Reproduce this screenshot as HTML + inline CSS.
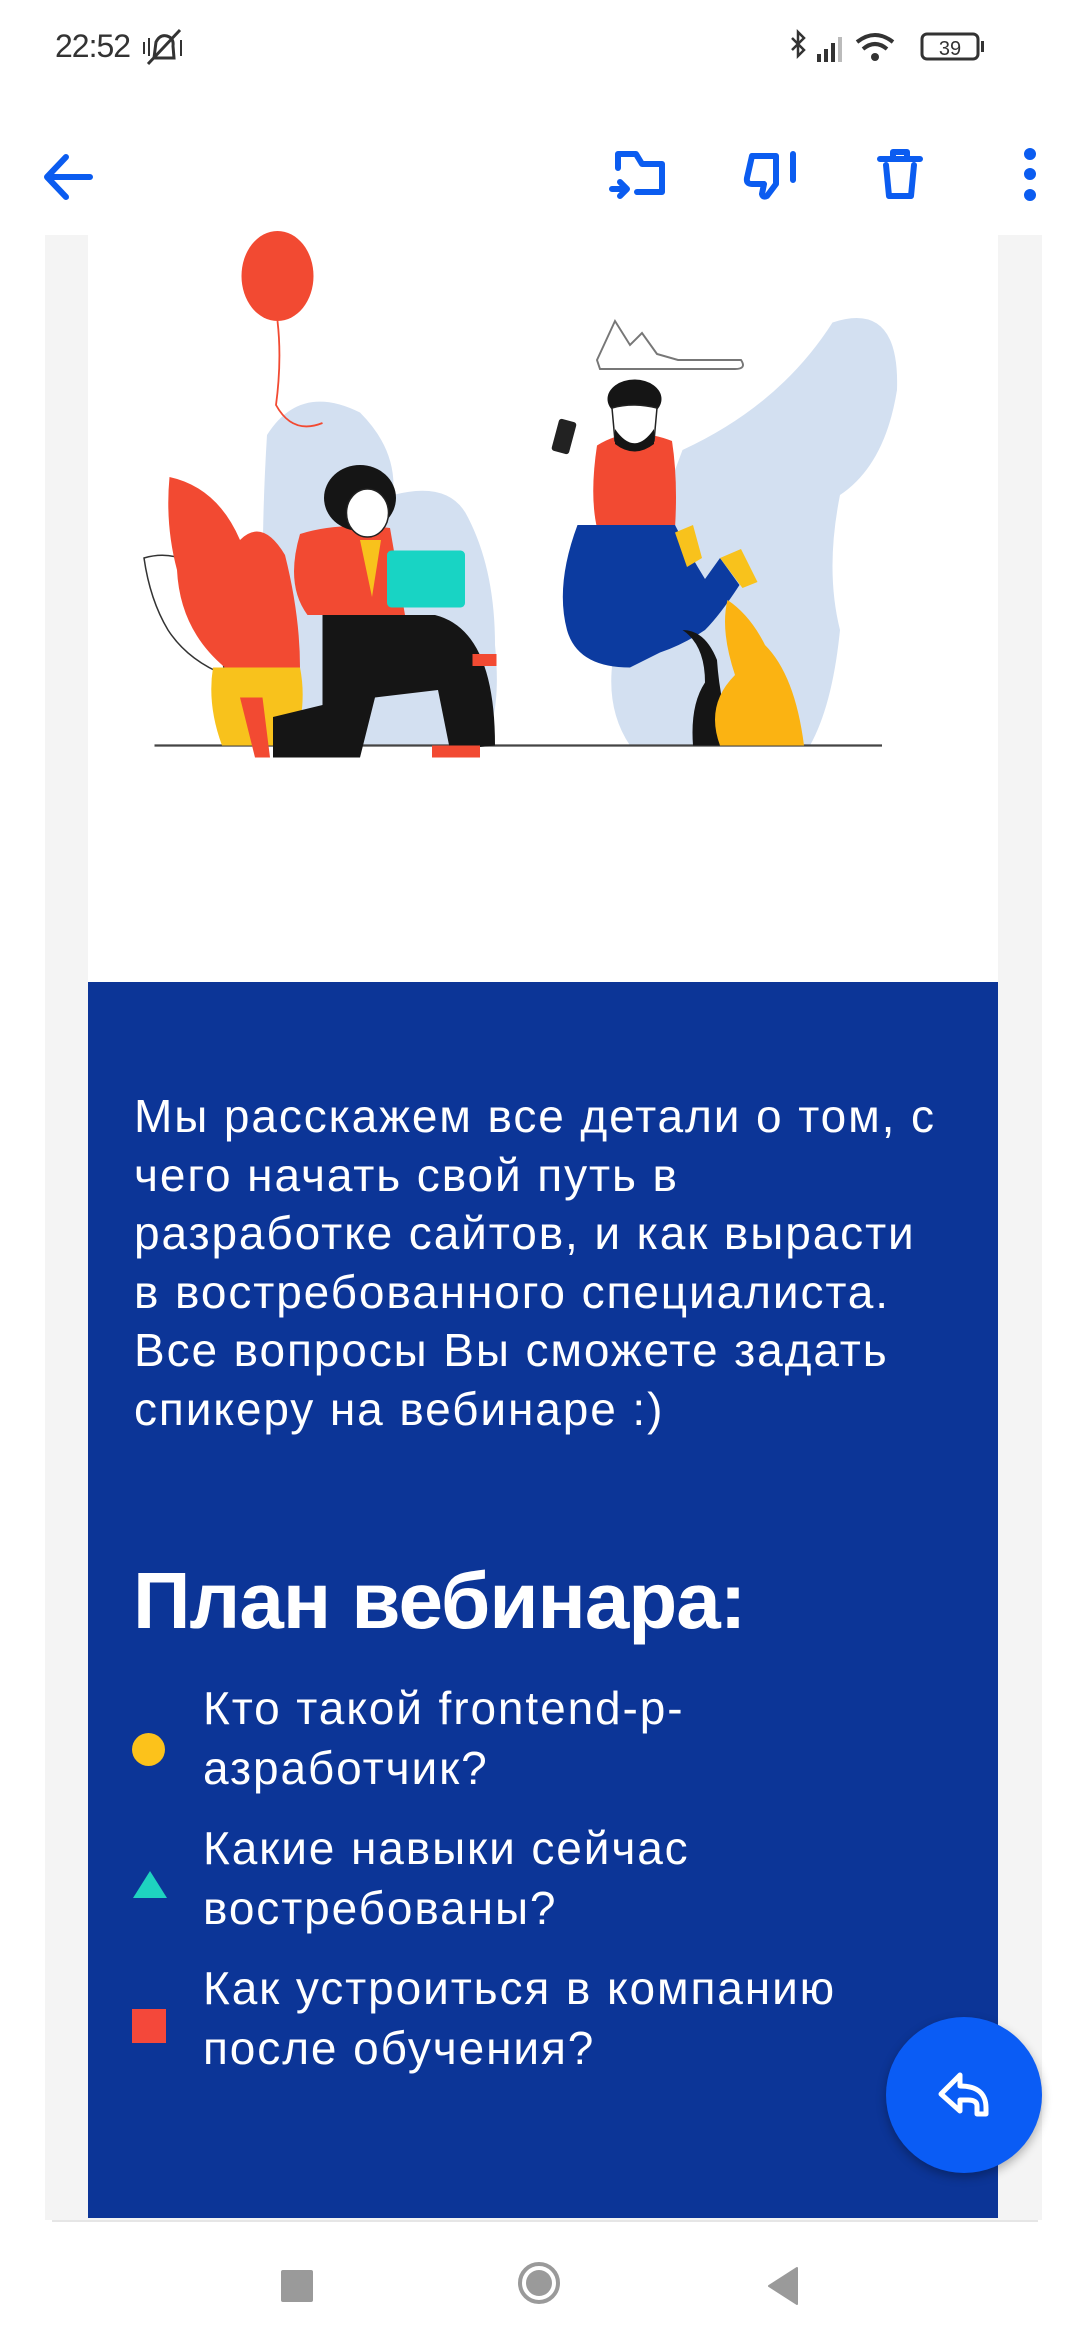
<!DOCTYPE html>
<html><head><meta charset="utf-8">
<style>
html,body{margin:0;padding:0;}
body{width:1080px;height:2340px;position:relative;background:#fff;overflow:hidden;font-family:"Liberation Sans",sans-serif;}
.abs{position:absolute;}
.side{background:#f4f4f4;}
.blue{background:#0c3597;}
.p{left:134px;top:1087px;color:#fff;font-size:46px;line-height:58.5px;letter-spacing:1.9px;white-space:nowrap;}
.h{left:133px;top:1555px;color:#fff;font-size:80px;font-weight:bold;letter-spacing:-1px;white-space:nowrap;}
.li{left:203px;color:#fff;font-size:46px;line-height:60px;letter-spacing:1.9px;white-space:nowrap;}
</style></head><body>
<div class="abs" style="left:55px;top:28px;font-size:32px;color:#333;letter-spacing:-1px;">22:52</div>
<svg class="abs" style="left:140px;top:28px" width="50" height="40" viewBox="0 0 50 40"><path d="M14 30 L16 14 Q20 6 27 8 Q34 10 33 18 L34 30 Z" fill="none" stroke="#333" stroke-width="3"/><path d="M8 36 L40 2" stroke="#333" stroke-width="3"/><path d="M4 14v12M9 10v18M41 12v16" stroke="#333" stroke-width="2"/></svg>
<svg class="abs" style="left:785px;top:28px" width="240" height="40" viewBox="0 0 240 40">
<path d="M7 10 L19 22 L13 28 V4 L19 10 L7 22" fill="none" stroke="#333" stroke-width="2.5"/>
<rect x="32" y="26" width="4" height="8" fill="#333"/><rect x="39" y="21" width="4" height="13" fill="#333"/><rect x="46" y="15" width="4" height="19" fill="#333"/><rect x="53" y="9" width="4" height="25" fill="#bbb"/>
<path d="M72 14 Q90 0 108 14" fill="none" stroke="#333" stroke-width="4"/><path d="M78 21 Q90 11 102 21" fill="none" stroke="#333" stroke-width="4"/><circle cx="90" cy="29" r="4" fill="#333"/>
<rect x="137" y="6" width="56" height="25" rx="5" fill="none" stroke="#333" stroke-width="3"/><rect x="196" y="13" width="3" height="11" fill="#333"/>
<text x="165" y="27" font-size="20" text-anchor="middle" fill="#333" font-family="Liberation Sans">39</text></svg>
<svg class="abs" style="left:0;top:140px" width="1080" height="75" viewBox="0 0 1080 75" fill="none" stroke="#0b5cf0" stroke-width="6" stroke-linecap="round" stroke-linejoin="round">
<path d="M90 37 H48 M66 17 L47 37 L66 57"/>
<path d="M618 28 V14 H636 L642 24 H662 V52 H637 M612 49 H626 M620 42 L627 49 L620 56"/>
<path d="M752 16 H776 V44 L767 56 Q763 58 762 54 L764 44 H752 Q746 44 747 38 Z M793 14 V40"/>
<path d="M880 19 H920 M893 19 V12 H907 V19 M886 25 L889 56 H911 L914 25"/>
<circle cx="1030" cy="14" r="3" fill="#0b5cf0"/><circle cx="1030" cy="34" r="3" fill="#0b5cf0"/><circle cx="1030" cy="55" r="3" fill="#0b5cf0"/>
</svg>
<div class="abs side" style="left:45px;top:235px;width:997px;height:1985px;"></div>
<div class="abs" style="left:88px;top:235px;width:910px;height:748px;background:#fff;"></div>
<div class="abs blue" style="left:88px;top:982px;width:910px;height:1236px;"></div>
<div class="abs" style="left:52px;top:2220px;width:986px;height:2px;background:#e6e6e6;"></div>
<svg class="abs" style="left:0;top:0" width="1080" height="1000" viewBox="0 0 720 666.67">
<path d="M178 290 Q200 255 240 275 Q265 300 262 330 Q300 320 312 345 Q330 380 330 430 Q335 480 320 497 H185 Q170 420 178 290 Z" fill="#d3e0f1"/>
<path d="M455 300 Q520 270 555 215 Q600 200 598 260 Q590 310 560 330 Q550 380 560 420 Q555 470 540 497 H420 Q395 460 420 400 Q440 340 455 300 Z" fill="#d3e0f1"/>
<path d="M398 240 L410 214 L420 230 L428 222 L438 236 L452 240 L494 240 Q498 246 490 246 H400 Z" fill="none" stroke="#777" stroke-width="1.3"/>
<ellipse cx="185" cy="184" rx="24" ry="30" fill="#f24a32"/>
<path d="M185 214 Q188 240 184 270 Q195 290 215 282" fill="none" stroke="#f24a32" stroke-width="1.2"/>
<line x1="103" y1="497" x2="588" y2="497" stroke="#444" stroke-width="1.5"/>
<path d="M96 372 Q120 365 140 385 L150 450 Q125 440 112 420 Q100 400 96 372 Z" fill="#fff" stroke="#333" stroke-width="1"/>
<path d="M113 318 Q145 325 160 360 Q175 345 190 370 Q200 410 200 445 H150 Q120 420 118 380 Q110 350 113 318 Z" fill="#f24a32"/>
<path d="M142 445 H200 Q205 470 196 497 H148 Q138 470 142 445 Z" fill="#f8c21c"/>
<path d="M200 356 Q225 348 260 352 L270 410 H205 Q190 390 200 356 Z" fill="#f24a32"/>
<ellipse cx="240" cy="332" rx="24" ry="22" fill="#151515"/>
<ellipse cx="245" cy="342" rx="14" ry="16" fill="#fff" stroke="#222" stroke-width="1"/>
<path d="M240 360 L248 398 L254 360 Z" fill="#f8c21c"/>
<rect x="258" y="367" width="52" height="38" rx="3" fill="#18d4c4"/>
<path d="M215 410 H290 Q330 420 330 497 L300 500 L292 460 L250 465 L240 505 H182 L182 478 L215 470 Z" fill="#151515"/>
<rect x="315" y="436" width="16" height="8" fill="#f24a32"/>
<path d="M288 497 H320 V505 H288 Z" fill="#f24a32"/>
<path d="M160 465 L170 505 H180 L175 465 Z" fill="#f24a32"/>
<path d="M398 297 Q420 283 448 294 Q452 320 450 352 H398 Q393 330 398 297 Z" fill="#f24a32"/>
<ellipse cx="423" cy="266" rx="18" ry="13" fill="#151515"/>
<path d="M408 272 Q422 268 438 272 L436 294 Q423 302 410 294 Z" fill="#fff" stroke="#222" stroke-width="1"/>
<path d="M410 286 Q423 305 436 286 L436 296 Q423 306 410 296 Z" fill="#151515"/>
<rect x="370" y="280" width="12" height="22" rx="2" fill="#222" transform="rotate(15 376 291)"/>
<path d="M385 350 H450 Q460 370 470 386 L480 372 L493 390 Q480 410 470 420 Q455 430 440 435 L420 445 Q385 445 378 420 Q370 390 385 350 Z" fill="#0c3ba0"/>
<path d="M450 355 L462 350 L468 372 L458 378 Z M480 372 L494 366 L505 388 L495 392 Z" fill="#f8c21c"/>
<path d="M455 420 Q470 430 470 455 Q460 470 462 497 H490 Q480 470 478 440 Q470 420 455 420 Z" fill="#151515"/>
<path d="M485 400 Q500 410 510 430 Q530 450 536 497 H480 Q470 470 490 450 Q480 420 485 400 Z" fill="#fbb312"/>
</svg>
<div class="abs p">Мы расскажем все детали о том, с<br>чего начать свой путь в<br>разработке сайтов, и как вырасти<br>в востребованного специалиста.<br>Все вопросы Вы сможете задать<br>спикеру на вебинаре :)</div>
<div class="abs h">План вебинара:</div>
<div class="abs li" style="top:1678px">Кто такой frontend-р-<br>азработчик?</div>
<div class="abs li" style="top:1818px">Какие навыки сейчас<br>востребованы?</div>
<div class="abs li" style="top:1958px">Как устроиться в компанию<br>после обучения?</div>
<div class="abs" style="left:132px;top:1733px;width:33px;height:33px;border-radius:50%;background:#fcc21b;"></div>
<svg class="abs" style="left:132px;top:1868px" width="36" height="32"><path d="M18 3 L35 30 H1 Z" fill="#1ed3c0"/></svg>
<div class="abs" style="left:132px;top:2009px;width:34px;height:34px;background:#f4483a;"></div>
<div class="abs" style="left:886px;top:2017px;width:156px;height:156px;border-radius:50%;background:#0a5cf5;box-shadow:0 4px 10px rgba(0,0,0,.3);"></div>
<svg class="abs" style="left:936px;top:2066px" width="60" height="60" viewBox="0 0 60 60" fill="none" stroke="#fff" stroke-width="5" stroke-linejoin="round" stroke-linecap="round"><path d="M5 28 L24 9 V20 Q50 20 50 42 V48 H41 V40 Q41 34 32 34 H24 V45 Z"/></svg>
<div class="abs" style="left:281px;top:2270px;width:32px;height:32px;background:#9a9a9a;border-radius:2px;"></div>
<div class="abs" style="left:518px;top:2262px;width:42px;height:42px;border-radius:50%;border:4px solid #9a9a9a;box-sizing:border-box;"></div>
<div class="abs" style="left:526px;top:2270px;width:26px;height:26px;border-radius:50%;background:#9a9a9a;"></div>
<svg class="abs" style="left:765px;top:2266px" width="36" height="40"><path d="M32 2 V38 L4 20 Z" fill="#9a9a9a" stroke="#9a9a9a" stroke-width="2" stroke-linejoin="round"/></svg>
</body></html>
